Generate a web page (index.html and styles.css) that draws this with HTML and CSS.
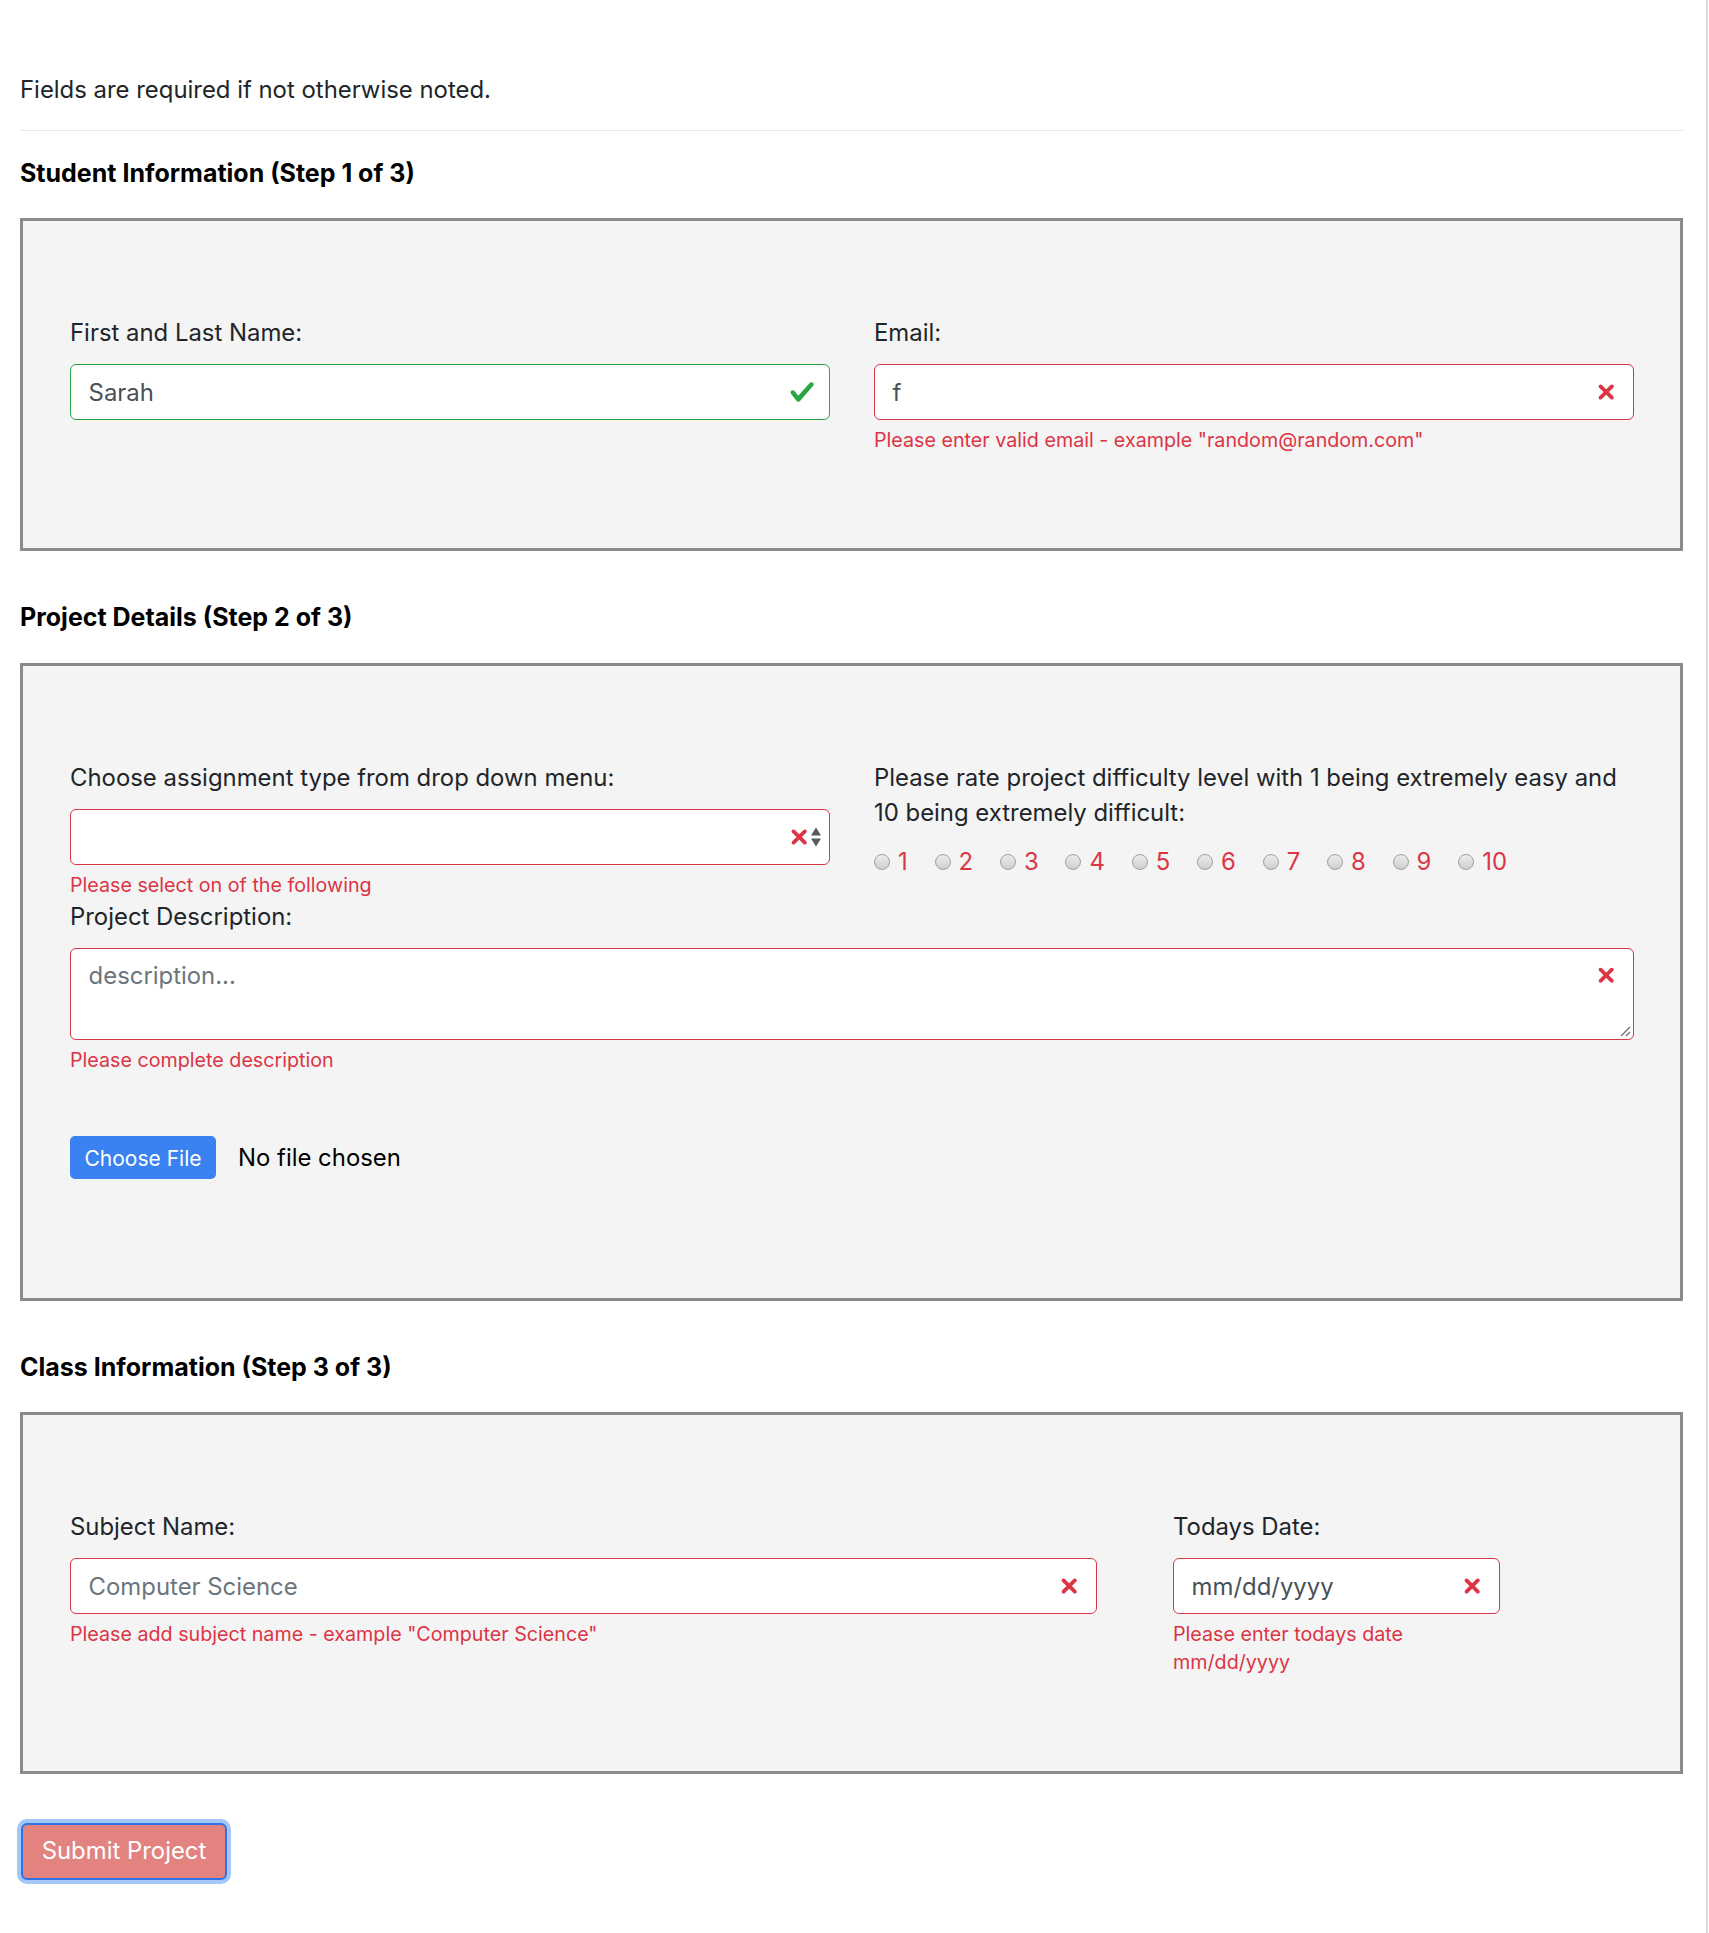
FILE: index.html
```html
<!DOCTYPE html>
<html lang="en">
<head>
<meta charset="utf-8">
<title>Submit Project</title>
<link rel="stylesheet" href="styles.css">
</head>
<body>
<main class="page">
  <p class="note">Fields are required if not otherwise noted.</p>
  <hr class="rule">

  <section class="step">
    <h2 class="step-title">Student Information (Step 1 of 3)</h2>
    <div class="panel">
      <div class="row">
        <div class="field col-half">
          <div class="field-label">First and Last Name:</div>
          <div class="control is-valid">
            <span class="control-value">Sarah</span>
            <svg class="state-icon" viewBox="0 0 8 8"><path fill="#28a745" d="M2.3 6.73L.6 4.53c-.4-1.04.46-1.4 1.1-.8l1.1 1.4 3.4-3.8c.6-.63 1.6-.27 1.2.7l-4 4.6c-.43.5-.8.4-1.1.1z"/></svg>
          </div>
        </div>
        <div class="field col-half">
          <div class="field-label">Email:</div>
          <div class="control is-invalid">
            <span class="control-value">f</span>
            <svg class="state-icon" viewBox="-2 -2 7 7" fill="#dc3545"><path stroke="#dc3545" d="M0 0l3 3m0-3L0 3"/><circle r=".5"/><circle cx="3" r=".5"/><circle cy="3" r=".5"/><circle cx="3" cy="3" r=".5"/></svg>
          </div>
          <div class="feedback">Please enter valid email - example "random@random.com"</div>
        </div>
      </div>
    </div>
  </section>

  <section class="step">
    <h2 class="step-title">Project Details (Step 2 of 3)</h2>
    <div class="panel panel-project">
      <div class="row">
        <div class="field col-half">
          <div class="field-label">Choose assignment type from drop down menu:</div>
          <div class="control is-invalid select-control">
            <svg class="state-icon select-x" viewBox="-2 -2 7 7" fill="#dc3545"><path stroke="#dc3545" d="M0 0l3 3m0-3L0 3"/><circle r=".5"/><circle cx="3" r=".5"/><circle cy="3" r=".5"/><circle cx="3" cy="3" r=".5"/></svg>
            <svg class="select-arrows" viewBox="0 0 12 22"><path fill="#55595e" d="M6 1.5L11 9.5H1z M6 20.5L11 12.5H1z"/></svg>
          </div>
          <div class="feedback">Please select on of the following</div>
        </div>
        <div class="field col-half">
          <div class="field-label">Please rate project difficulty level with 1 being extremely easy and<br>10 being extremely difficult:</div>
          <div class="rating">
            <span class="rate-item"><span class="radio"></span><span class="rate-num">1</span></span>
            <span class="rate-item"><span class="radio"></span><span class="rate-num">2</span></span>
            <span class="rate-item"><span class="radio"></span><span class="rate-num">3</span></span>
            <span class="rate-item"><span class="radio"></span><span class="rate-num">4</span></span>
            <span class="rate-item"><span class="radio"></span><span class="rate-num">5</span></span>
            <span class="rate-item"><span class="radio"></span><span class="rate-num">6</span></span>
            <span class="rate-item"><span class="radio"></span><span class="rate-num">7</span></span>
            <span class="rate-item"><span class="radio"></span><span class="rate-num">8</span></span>
            <span class="rate-item"><span class="radio"></span><span class="rate-num">9</span></span>
            <span class="rate-item"><span class="radio"></span><span class="rate-num">10</span></span>
          </div>
        </div>
      </div>
      <div class="field">
        <div class="field-label">Project Description:</div>
        <div class="control is-invalid textarea-control">
          <span class="control-value placeholder">description...</span>
          <svg class="state-icon top-icon" viewBox="-2 -2 7 7" fill="#dc3545"><path stroke="#dc3545" d="M0 0l3 3m0-3L0 3"/><circle r=".5"/><circle cx="3" r=".5"/><circle cy="3" r=".5"/><circle cx="3" cy="3" r=".5"/></svg>
          <svg class="resize-grip" viewBox="0 0 12 12"><path stroke="#6b6b6b" stroke-width="1.2" d="M11 2L2 11M11 7L7 11"/></svg>
        </div>
        <div class="feedback">Please complete description</div>
      </div>
      <div class="file-row">
        <span class="file-button">Choose File</span>
        <span class="file-status">No file chosen</span>
      </div>
    </div>
  </section>

  <section class="step">
    <h2 class="step-title">Class Information (Step 3 of 3)</h2>
    <div class="panel">
      <div class="row row-class">
        <div class="field col-subject">
          <div class="field-label">Subject Name:</div>
          <div class="control is-invalid">
            <span class="control-value placeholder">Computer Science</span>
            <svg class="state-icon" viewBox="-2 -2 7 7" fill="#dc3545"><path stroke="#dc3545" d="M0 0l3 3m0-3L0 3"/><circle r=".5"/><circle cx="3" r=".5"/><circle cy="3" r=".5"/><circle cx="3" cy="3" r=".5"/></svg>
          </div>
          <div class="feedback">Please add subject name - example "Computer Science"</div>
        </div>
        <div class="field col-date">
          <div class="field-label">Todays Date:</div>
          <div class="control is-invalid">
            <span class="control-value">mm/dd/yyyy</span>
            <svg class="state-icon" viewBox="-2 -2 7 7" fill="#dc3545"><path stroke="#dc3545" d="M0 0l3 3m0-3L0 3"/><circle r=".5"/><circle cx="3" r=".5"/><circle cy="3" r=".5"/><circle cx="3" cy="3" r=".5"/></svg>
          </div>
          <div class="feedback">Please enter todays date<br>mm/dd/yyyy</div>
        </div>
      </div>
    </div>
  </section>

  <button class="submit" type="button">Submit Project</button>
</main>
</body>
</html>
```

FILE: styles.css
```css
html {
  background: #fff;
}

body {
  margin: 0;
  font-family: Inter, Roboto, "Liberation Sans", Arial, sans-serif;
  font-size: 23.9px;
  line-height: 35.25px;
  color: #212529;
  background: #fff;
}

body::after {
  content: "";
  position: fixed;
  top: 0;
  bottom: 0;
  right: 1px;
  width: 2px;
  background: #d9d9d9;
}

.page {
  width: 1663px;
  padding: 72px 0 49px 20px;
}

.note {
  margin: 0 0 22.5px;
}

.rule {
  margin: 0 0 25px;
  border: 0;
  border-top: 1.5px solid #e6e6e6;
  height: 0;
}

.step-title {
  margin: 0 0 27px;
  font-size: 25px;
  line-height: 35.25px;
  font-weight: 700;
  color: #000;
}

.panel {
  border: 3px solid #8a8a8a;
  background: #f4f4f4;
  padding: 94px 46px 94px 47px;
  margin-bottom: 49px;
}

.panel-project {
  padding-bottom: 119px;
}

.row {
  display: flex;
  gap: 44px;
  align-items: flex-start;
}

.col-half {
  flex: 1 1 0;
  min-width: 0;
}

.row-class {
  gap: 76px;
}

.col-subject {
  width: 1027px;
}

.col-date {
  width: 327px;
}

.field-label {
  margin-bottom: 14px;
  color: #212529;
}

.control {
  position: relative;
  box-sizing: border-box;
  height: 56px;
  background: #fff;
  border: 1.5px solid #ced4da;
  border-radius: 6px;
  padding: 0 44px 0 17.6px;
  display: flex;
  align-items: center;
  color: #495057;
}

.control.is-valid {
  border-color: #28a745;
}

.control.is-invalid {
  border-color: #dc3545;
}

.control-value {
  white-space: nowrap;
}

.placeholder {
  color: #6c757d;
}

.state-icon {
  position: absolute;
  right: 13.2px;
  top: 50%;
  width: 26.4px;
  height: 26.4px;
  transform: translateY(-50%);
}

.select-x {
  right: 17px;
}

.select-arrows {
  position: absolute;
  right: 7px;
  top: 50%;
  width: 12px;
  height: 22px;
  transform: translateY(-50%);
}

.textarea-control {
  height: 92px;
  align-items: flex-start;
  padding-top: 8.8px;
}

.top-icon {
  top: 13.2px;
  transform: none;
}

.resize-grip {
  position: absolute;
  right: 2px;
  bottom: 2px;
  width: 12px;
  height: 12px;
}

.feedback {
  margin-top: 5.9px;
  font-size: 19.7px;
  line-height: 28.2px;
  color: #dc3545;
}

.rating {
  display: flex;
  align-items: center;
  height: 35.25px;
}

.rate-item {
  display: inline-flex;
  align-items: center;
  margin-right: 26.8px;
}

.radio {
  box-sizing: border-box;
  width: 16px;
  height: 16px;
  border-radius: 50%;
  border: 1px solid #a0a0a0;
  background: linear-gradient(#ececec, #cfcfcf);
  margin-right: 8px;
}

.rate-num {
  color: #dc3545;
}

.file-row {
  display: flex;
  align-items: center;
  gap: 22px;
  margin-top: 61.5px;
}

.file-button {
  box-sizing: border-box;
  height: 43px;
  width: 146px;
  display: inline-flex;
  align-items: center;
  justify-content: center;
  background: #3a81f2;
  color: #fff;
  border-radius: 5px;
  font-size: 21px;
  padding-top: 2px;
}

.file-status {
  color: #000;
}

.submit {
  display: block;
  box-sizing: border-box;
  height: 57px;
  width: 206px;
  margin: 1px 0 0 1px;
  font-family: Inter, Roboto, "Liberation Sans", Arial, sans-serif;
  font-size: 23.9px;
  line-height: 35.25px;
  color: #fff;
  background: #e2837f;
  border: 2px solid #2f74e6;
  border-radius: 6px;
  box-shadow: 0 0 0 4px #a4c6f9;
  padding: 0;
}
```
